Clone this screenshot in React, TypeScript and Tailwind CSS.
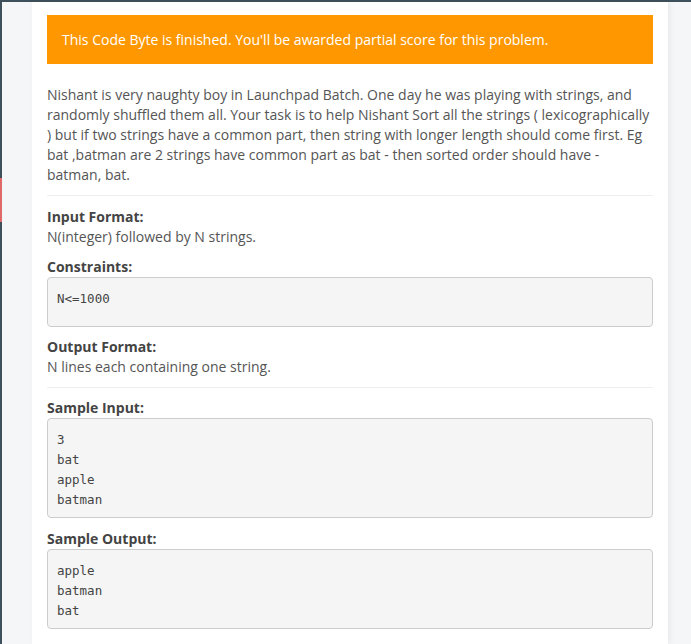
const sans = { fontFamily: '"Open Sans", "Liberation Sans", sans-serif' };

function Heading({ children }: { children: React.ReactNode }) {
    return <h4 className="text-[14px] leading-[20px] font-bold text-[#444]">{children}</h4>;
}

function Pre({ lines, tall }: { lines: string[]; tall?: boolean }) {
    return (
        <pre
            className={`bg-[#f5f5f5] border border-[#ccc] rounded-[4px] px-[9px] pt-[11px] pb-[7px] text-[12.5px] leading-[20px] text-[#444] font-['DejaVu_Sans_Mono','Liberation_Mono',monospace] ${tall ? "h-[50px]" : ""}`}
        >
            {lines.join("\n")}
        </pre>
    );
}

export default function App() {
    return (
        <div className="h-screen w-full flex flex-col bg-[#3e505b]" style={sans}>
            <div className="h-[2px] shrink-0" />
            <div className="flex flex-1 min-h-0">
                <div className="w-[2px] shrink-0 flex flex-col">
                    <div className="h-[176px]" />
                    <div className="h-[44px] bg-[#e06a6a]" />
                </div>
                <div className="flex-1 bg-[#f5f6f7] pl-[30px] flex">
                    <div className="w-[636px] bg-white px-[15px] pt-[13px] shadow-[2px_0_6px_rgba(0,0,0,0.06)]">
                        <div className="bg-[#ff9800] h-[49px] pl-[15px] flex items-center text-white text-[14px] mb-[21px]">
                            This Code Byte is finished. You'll be awarded partial score for this problem.
                        </div>

                        <p className="text-[14px] leading-[20px] text-[#555]">
                            Nishant is very naughty boy in Launchpad Batch. One day he was playing with strings, and randomly shuffled them all. Your task is to help Nishant Sort all the strings ( lexicographically ) but if two strings have a common part, then string with longer length should come first. Eg bat ,batman are 2 strings have common part as bat - then sorted order should have - batman, bat.
                        </p>

                        <hr className="border-t border-[#eee] mt-[10px] mb-[11px]" />

                        <Heading>Input Format:</Heading>
                        <p className="text-[14px] leading-[20px] text-[#555]">N(integer) followed by N strings.</p>

                        <div className="mt-[10px]">
                            <Heading>Constraints:</Heading>
                            <Pre lines={["N<=1000"]} tall />
                        </div>

                        <div className="mt-[10px]">
                            <Heading>Output Format:</Heading>
                            <p className="text-[14px] leading-[20px] text-[#555]">N lines each containing one string.</p>
                        </div>

                        <hr className="border-t border-[#eee] mt-[10px] mb-[10px]" />

                        <Heading>Sample Input:</Heading>
                        <Pre lines={["3", "bat", "apple", "batman"]} />

                        <div className="mt-[11px]">
                            <Heading>Sample Output:</Heading>
                            <Pre lines={["apple", "batman", "bat"]} />
                        </div>
                    </div>
                </div>
            </div>
        </div>
    );
}
